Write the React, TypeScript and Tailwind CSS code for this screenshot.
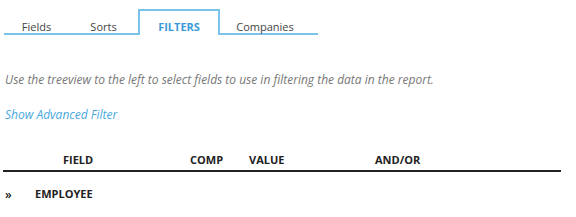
import React from "react"

const tabs = [
    { label: "Fields", w: "w-[65px]" },
    { label: "Sorts", w: "w-[69px]" },
    { label: "FILTERS", w: "w-[82px]", active: true },
    { label: "Companies", w: "w-[90px]" },
]

export default function App() {
    return (
        <div className="w-[576px] h-[217px] bg-white font-['Open_Sans',sans-serif] text-[#333]">
            {/* Tabs */}
            <div className="flex pl-[4px] pt-[9px]">
                {tabs.map((t) =>
                    t.active ? (
                        <div
                            key={t.label}
                            className={`${t.w} h-[26px] border-2 border-b-0 border-[#7cc3ec] flex items-end justify-center pb-[3px] leading-none text-[11px] font-bold text-[#3a9ad9]`}
                        >
                            {t.label}
                        </div>
                    ) : (
                        <div
                            key={t.label}
                            className={`${t.w} h-[26px] border-b-2 border-[#7cc3ec] flex items-end justify-center pb-[1px] leading-none text-[11px] text-[#444]`}
                        >
                            {t.label}
                        </div>
                    )
                )}
                <div className="w-[8px] h-[26px] border-b-2 border-[#7cc3ec]"></div>
            </div>

            <p className="mt-[36px] ml-[5px] text-[12px] italic text-[#777]">
                Use the treeview to the left to select fields to use in filtering the data in the report.
            </p>

            <a className="block mt-[17px] ml-[5px] text-[12px] italic text-[#4aa8e0] cursor-pointer">
                Show Advanced Filter
            </a>

            {/* Filter table */}
            <div className="mt-[26px] ml-[3px] w-[558px]">
                <div className="flex h-[22px] items-center text-[11px] font-bold text-[#222] border-b-2 border-[#222]">
                    <div className="w-[187px] pl-[60px]">FIELD</div>
                    <div className="w-[59px]">COMP</div>
                    <div className="w-[126px]">VALUE</div>
                    <div>AND/OR</div>
                </div>
                <div className="flex items-center h-[22px] mt-[11px] text-[11px] font-bold text-[#222]">
                    <span className="w-[32px] pl-[2px] pt-[2px] text-[12px] font-semibold leading-none">»</span>
                    <span>EMPLOYEE</span>
                </div>
            </div>
        </div>
    )
}
